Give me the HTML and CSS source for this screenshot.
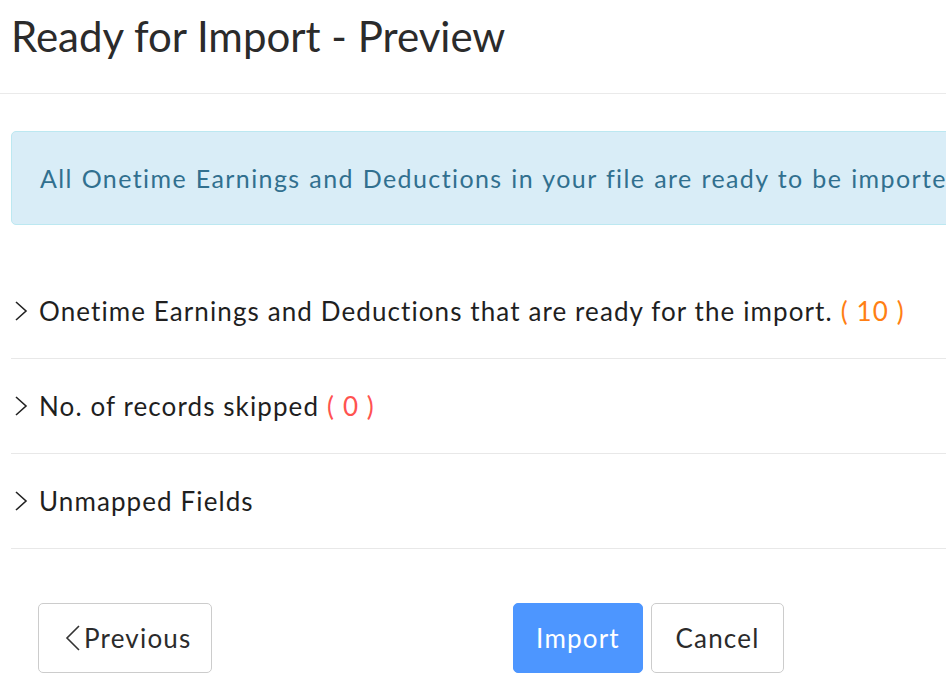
FILE: index.html
```html
<!DOCTYPE html>
<html lang="en">
<head>
<meta charset="utf-8">
<title>Ready for Import - Preview</title>
<link rel="stylesheet" href="styles.css">
</head>
<body>
<div class="page">
  <header class="head">
    <h1 class="title">Ready for Import - Preview</h1>
  </header>
  <div class="body">
    <div class="alert">All Onetime Earnings and Deductions in your file are ready to be imported.</div>
    <div class="sections">
      <div class="row">
        <svg class="chev" width="14" height="22" viewBox="0 0 14 22"><polyline points="2,2 12,11 2,20" fill="none" stroke="#222" stroke-width="1.6"/></svg>
        <span class="label">Onetime Earnings and Deductions that are ready for the import.</span>
        <span class="count orange">( 10 )</span>
      </div>
      <div class="row">
        <svg class="chev" width="14" height="22" viewBox="0 0 14 22"><polyline points="2,2 12,11 2,20" fill="none" stroke="#222" stroke-width="1.6"/></svg>
        <span class="label">No. of records skipped</span>
        <span class="count red">( 0 )</span>
      </div>
      <div class="row">
        <svg class="chev" width="14" height="22" viewBox="0 0 14 22"><polyline points="2,2 12,11 2,20" fill="none" stroke="#222" stroke-width="1.6"/></svg>
        <span class="label">Unmapped Fields</span>
      </div>
    </div>
    <div class="footer">
      <button class="btn btn-prev">
        <svg width="16" height="26" viewBox="0 0 16 26"><polyline points="14,1 2,13 14,25" fill="none" stroke="#333" stroke-width="1.6"/></svg>
        <span>Previous</span>
      </button>
      <div class="actions">
        <button class="btn btn-primary">Import</button>
        <button class="btn btn-cancel">Cancel</button>
      </div>
    </div>
  </div>
</div>
</body>
</html>
```

FILE: styles.css
```css
html, body {
  margin: 0;
  padding: 0;
  background: #fff;
  overflow: hidden;
}
body {
  font-family: "Lato", "Noto Sans", sans-serif;
  color: #222;
}
.page {
  width: 1200px;
}
.head {
  height: 94px;
  border-bottom: 1px solid #eaeaea;
  padding-left: 11px;
  box-sizing: border-box;
}
.title {
  margin: 0;
  padding-top: 9px;
  font-size: 42px;
  font-weight: 400;
  line-height: 54px;
  color: #2b2b2b;
}
.body {
  padding: 37px 0 0 11px;
}
.alert {
  height: 94px;
  box-sizing: border-box;
  background: #d9edf7;
  border: 1px solid #bce8f1;
  border-radius: 5px;
  color: #31708f;
  font-size: 25px;
  letter-spacing: 1.4px;
  word-spacing: 1px;
  padding-left: 28px;
  display: flex;
  align-items: center;
  white-space: nowrap;
}
.sections {
  margin-top: 39px;
}
.row {
  height: 94px;
  border-bottom: 1px solid #e8e8e8;
  display: flex;
  align-items: center;
  font-size: 26px;
  letter-spacing: 1.1px;
  color: #1f1f1f;
  white-space: nowrap;
}
.chev {
  margin-left: 3px;
  margin-right: 11px;
  flex: none;
}
.count {
  margin-left: 8px;
}
.orange { color: #ff7f14; }
.red { color: #ff5350; }
.footer {
  margin-top: 54px;
  display: flex;
  align-items: center;
  padding-left: 27px;
}
.btn {
  height: 70px;
  box-sizing: border-box;
  border: 1px solid #cccccc;
  border-radius: 5px;
  background: #fff;
  font-family: "Lato", "Noto Sans", sans-serif;
  font-size: 26px;
  letter-spacing: 1.2px;
  color: #2b2b2b;
  padding: 0;
  display: inline-flex;
  align-items: center;
  justify-content: center;
  cursor: pointer;
}
.btn-prev {
  width: 174px;
  justify-content: flex-start;
  padding-left: 26px;
  gap: 3px;
}
.actions {
  margin-left: 301px;
  display: flex;
  gap: 8px;
}
.btn-primary {
  width: 130px;
  background: #4d96ff;
  border-color: #4d96ff;
  color: #fff;
}
.btn-cancel {
  width: 133px;
}
```
